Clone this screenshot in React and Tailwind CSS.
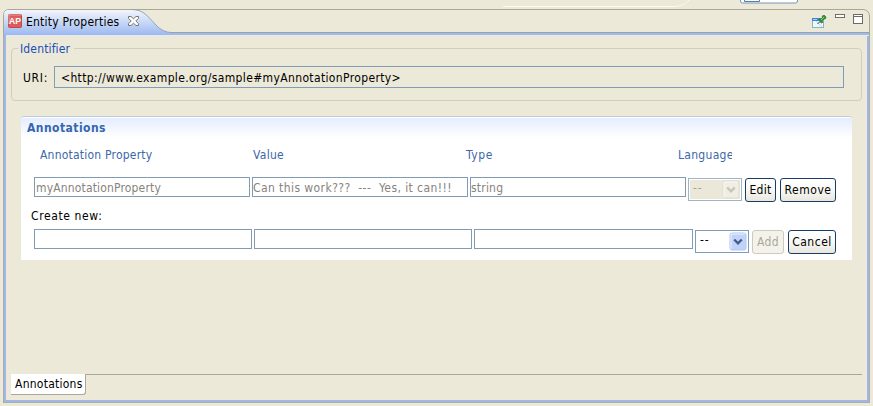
import React from "react";

function Label({ className = "", children }) {
  return <span className={`block h-4 shrink-0 whitespace-pre ${className}`}>{children}</span>;
}

function Field({ className = "", children }) {
  return (
    <div className={`h-5 shrink-0 border border-[#829bb0] pt-0.5 text-[#86837d] ${className}`}>
      {children}
    </div>
  );
}

function Combo({ disabled = false }) {
  return (
    <div className={`flex h-[23px] w-[54px] shrink-0 justify-between border p-px pl-1 ${disabled ? "border-[#a0b4c8] bg-[#ebe8d9] text-[#a5a293] outline-1 -outline-offset-2 outline-white" : "border-[#7f9db9] bg-white text-black"}`}>
      <Label className="tracking-[0.8px]">--</Label>
      <svg width="18" height="19" viewBox="0 0 18 19">
        <rect x="1" y="1" width="16" height="17" rx="2" fill={disabled ? "#f0eee4" : "#c2d3fb"} stroke={disabled ? "#dedccd" : "#b1c6f2"} />
        <path d="M2 17V2h14" fill="none" stroke="#fff" opacity=".7" />
        <path d="M5.2 7.5 9 11.3l3.8-3.8" fill="none" stroke={disabled ? "#c6c4b8" : "#435b86"} strokeWidth="2.3" />
      </svg>
    </div>
  );
}

function Button({ className, disabled = false, children }) {
  return (
    <button
      disabled={disabled}
      className={`flex h-6 shrink-0 items-start justify-center rounded-[3px] border pt-[3px] ${disabled ? "border-[#cdcbbd] bg-[#f4f3eb] text-[#aaa79a]" : "border-[#173e68] bg-linear-to-b from-white via-[#f8f8f4] to-[#e8e6dc] text-black"} ${className}`}
    >
      {children}
    </button>
  );
}

function TabHeader() {
  return (
    <div className="relative h-[27px] shrink-0">
      <svg className="absolute left-0 top-0" width="867" height="27" viewBox="0 0 867 27">
        <defs>
          <linearGradient id="tab" x1="0" y1="0" x2="0" y2="1">
            <stop offset="0" stopColor="#f3f6fc" />
            <stop offset=".45" stopColor="#c9d9f7" />
            <stop offset="1" stopColor="#9ab6f0" />
          </linearGradient>
        </defs>
        <path d="M.5 27V5.5Q1 .5 6 .5H860Q866 1 866.5 7V27" fill="none" stroke="#aaa797" />
        <path d="M1 27V6Q1 1 6 1H128C137 1 141 4 147 10C154 17 158 22.5 168 23.5V27Z" fill="url(#tab)" />
        <path d="M128 .5C137 .5 141 3.5 147 9.5C154 17 158 23 168 23.5H866" fill="none" stroke="#91a3b9" />
        <path d="M168 24H866V26H166Z" fill="#a6b9df" />
        <path d="M3 26.5H864" stroke="#e3eaf4" />
      </svg>
      <div className="relative flex h-[26px] items-start pl-[5px] pr-[7px]">
        <svg className="mt-[5px]" width="14" height="14" viewBox="0 0 14 14">
          <rect x=".5" y=".5" width="13" height="13" rx="1" fill="#df5b5b" stroke="#bd4a4c" />
          <path d="M1 10V1h12" fill="none" stroke="#f09a98" />
          <text x="1" y="10" textLength="12" lengthAdjust="spacingAndGlyphs" fill="#fff" fontFamily="Liberation Sans" fontSize="9" fontWeight="bold">AP</text>
        </svg>
        <Label className="ml-1 mt-[5px] w-[93px] tracking-[0.23px]">Entity Properties</Label>
        <svg className="ml-[9px] mt-[7px]" width="11" height="10" viewBox="0 0 11 10">
          <path d="M.5.5h2.500l2.500 2.300L8 .5h2.500v1.800L7.800 5l2.700 2.700v1.800H8L5.500 7.200 3 9.500H.5V7.700L3.200 5 .5 2.300Z" fill="#fff" stroke="#77746c" />
        </svg>
        <div className="ml-auto flex items-start">
          <svg className="mt-[6px]" width="15" height="14" viewBox="0 0 15 14">
            <rect x=".5" y="3.500" width="11" height="9" fill="#eef7fd" stroke="#8fb0bd" />
            <path d="M0 3h8v3H0z" fill="#3b86cc" />
            <path d="M1 4.500h4" stroke="#9cd2ff" />
            <path d="m4 6 6 6" stroke="#b5d9ef" />
            <path d="m5.500 9 3-3" stroke="#244d24" />
            <path d="m7 4 2-.2L10.300 2.500V1L12 0l2 2-.8 2H12l-1.500 1.500.2 2L9 8Z" fill="#38963b" stroke="#296b2d" strokeWidth=".7" />
            <path d="m9 5 3-3" stroke="#88d17b" />
          </svg>
          <svg className="ml-2 mt-[5px]" width="10" height="5">
            <rect x=".5" y=".5" width="9" height="3" fill="#fff" stroke="#706b62" />
          </svg>
          <svg className="ml-2 mt-[5px]" width="10" height="10">
            <rect x=".5" y=".5" width="9" height="9" fill="#fff" stroke="#706b62" />
            <path d="M0 2.500h10" stroke="#706b62" />
          </svg>
        </div>
      </div>
    </div>
  );
}

export default function App() {
  return (
    <div className="flex h-[406px] w-[873px] flex-col overflow-hidden bg-[#ece9d8] pl-[3px] font-['DejaVu_Sans_Condensed','DejaVu_Sans',sans-serif] text-[12px] leading-4 text-black">
      <svg className="block shrink-0" width="870" height="9">
        <path d="M500 6.500H672Q681 6 686 0" fill="none" stroke="#faf9f2" />
        <path d="M737.500 0v1q0 2 2 2h53q2 0 2-2V0" fill="#fff" stroke="#7894b6" />
        <path d="M741.500 0v1.500h15V0" fill="none" stroke="#557da5" />
      </svg>
      <div className="flex h-[394px] w-[867px] flex-col">
        <TabHeader />
        <div className="flex h-[367px] flex-col border-b border-l border-r border-[#a9adb0]">
          <div className="flex h-[366px] flex-col border-x-2 border-b-2 border-[#a0b7e6] pl-[5px]">
            <fieldset className="relative mt-3 h-[53px] w-[851px] shrink-0 rounded-[4px] border border-[#d0cfbd]">
              <div className="absolute -top-2 left-[6px] bg-[#ece9d8] pl-0.5 pr-1 text-[#194fb7]">
                <Label className="w-[50px] tracking-[0.15px]">Identifier</Label>
              </div>
              <div className="flex pl-[11px] pt-[17px]">
                <Label className="mt-[4px] w-[25px] tracking-[0.7px]">URI:</Label>
                <div className="ml-[6px] h-[22px] w-[790px] border border-[#7f9db9] pl-[6px] pt-[3px]">
                  <Label className="tracking-[0.36px]">{"<http://www.example.org/sample#myAnnotationProperty>"}</Label>
                </div>
              </div>
            </fieldset>
            <section className="ml-[10px] mt-[15px] flex h-[144px] w-[831px] shrink-0 flex-col rounded-t-[3px] bg-white">
              <div className="h-[22px] rounded-t-[3px] border-t border-[#b9cbdd] bg-linear-to-b from-[#e3ecfe] to-white pl-[6px] pt-[3px] font-bold text-[#3566b0] shadow-[inset_0_1px_0_#fff]">
                <Label className="tracking-[0.45px]">Annotations</Label>
              </div>
              <div className="flex pl-[19px] pt-[9px] text-[#3c67a9]">
                <div className="w-[213px]"><Label className="tracking-[0.22px]">Annotation Property</Label></div>
                <div className="w-[213px]"><Label className="tracking-[0.3px]">Value</Label></div>
                <div className="w-[212px]"><Label className="tracking-[0.6px]">Type</Label></div>
                <div className="w-[54px] overflow-hidden"><Label className="tracking-[0.3px]">Language</Label></div>
              </div>
              <div className="mt-[14px] flex h-6 pl-[13px]">
                <Field className="w-[216px] pl-px"><Label className="tracking-[0.16px]">myAnnotationProperty</Label></Field>
                <Field className="ml-0.5 w-[216px]"><Label className="tracking-[0.42px]">{"Can this work???  ---  Yes, it can!!!"}</Label></Field>
                <Field className="ml-0.5 w-[216px]"><Label className="tracking-[0.2px]">string</Label></Field>
                <div className="ml-0.5 mt-px flex">
                  <Combo disabled />
                  <Button className="ml-[3px] w-[31px]"><Label className="tracking-[0.3px]">Edit</Label></Button>
                  <Button className="ml-1 w-14"><Label className="tracking-[0.55px]">Remove</Label></Button>
                </div>
              </div>
              <div className="pl-[10px] pt-[7px]"><Label className="tracking-[0.62px]">Create new:</Label></div>
              <div className="mt-[5px] flex pl-[13px]">
                <Field className="w-[218px]" />
                <Field className="ml-0.5 w-[218px]" />
                <Field className="ml-0.5 w-[219px]" />
                <div className="ml-0.5 mt-px flex">
                  <Combo />
                  <Button disabled className="ml-[3px] w-8"><Label className="tracking-[0.3px]">Add</Label></Button>
                  <Button className="ml-1 w-12"><Label className="tracking-[0.5px]">Cancel</Label></Button>
                </div>
              </div>
            </section>
            <div className="mb-[5px] mt-auto flex h-[21px] w-[851px] shrink-0">
              <div className="w-[75px] rounded-br-[3px] border-b border-r border-[#aca899] bg-white pl-1 pt-[2px]">
                <Label className="tracking-[0.25px]">Annotations</Label>
              </div>
              <div className="h-px flex-1 bg-[#aaa797]" />
            </div>
          </div>
        </div>
      </div>
    </div>
  );
}
